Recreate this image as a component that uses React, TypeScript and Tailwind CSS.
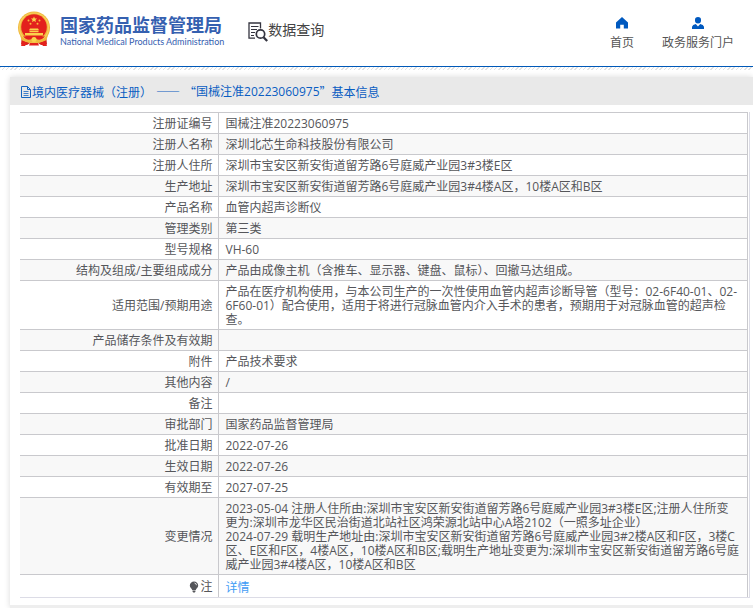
import React from "react"
import { clsx } from "clsx"

// ── Record data ───────────────────────────────────────────────────────────────

interface RecordRow {
  label: string
  value: string[]
}

const ROWS: RecordRow[] = [
  { label: "注册证编号", value: ["国械注准20223060975"] },
  { label: "注册人名称", value: ["深圳北芯生命科技股份有限公司"] },
  { label: "注册人住所", value: ["深圳市宝安区新安街道留芳路6号庭威产业园3#3楼E区"] },
  { label: "生产地址", value: ["深圳市宝安区新安街道留芳路6号庭威产业园3#4楼A区，10楼A区和B区"] },
  { label: "产品名称", value: ["血管内超声诊断仪"] },
  { label: "管理类别", value: ["第三类"] },
  { label: "型号规格", value: ["VH-60"] },
  {
    label: "结构及组成/主要组成成分",
    value: ["产品由成像主机（含推车、显示器、键盘、鼠标）、回撤马达组成。"],
  },
  {
    label: "适用范围/预期用途",
    value: [
      "产品在医疗机构使用，与本公司生产的一次性使用血管内超声诊断导管（型号：02-6F40-01、02-6F60-01）配合使用，适用于将进行冠脉血管内介入手术的患者，预期用于对冠脉血管的超声检查。",
    ],
  },
  { label: "产品储存条件及有效期", value: [] },
  { label: "附件", value: ["产品技术要求"] },
  { label: "其他内容", value: ["/"] },
  { label: "备注", value: [] },
  { label: "审批部门", value: ["国家药品监督管理局"] },
  { label: "批准日期", value: ["2022-07-26"] },
  { label: "生效日期", value: ["2022-07-26"] },
  { label: "有效期至", value: ["2027-07-25"] },
  {
    label: "变更情况",
    value: [
      "2023-05-04 注册人住所由:深圳市宝安区新安街道留芳路6号庭威产业园3#3楼E区;注册人住所变更为:深圳市龙华区民治街道北站社区鸿荣源北站中心A塔2102（一照多址企业）",
      "2024-07-29 载明生产地址由:深圳市宝安区新安街道留芳路6号庭威产业园3#2楼A区和F区，3楼C区、E区和F区，4楼A区，10楼A区和B区;载明生产地址变更为:深圳市宝安区新安街道留芳路6号庭威产业园3#4楼A区，10楼A区和B区",
    ],
  },
]

// ── Icons ─────────────────────────────────────────────────────────────────────

function Emblem() {
  return (
    <svg viewBox="0 0 34 36" className="h-9 w-[34px] shrink-0" aria-hidden="true">
      <path d="M5 24L4 33.500L10 34L13 32L17 34L21 32L24 34L30 33.500L29 24Z" fill="#d9201a" />
      <circle cx="17" cy="16.500" r="16" fill="#f0b83c" />
      <circle cx="17" cy="16.500" r="14.500" fill="none" stroke="#f7cf5d" strokeWidth="1.200" />
      <circle cx="17" cy="16" r="12.800" fill="#e3211d" />
      <path d="M17 5.500l.9 2h2.200l-1.700 1.400.6 2.200-2-1.200-2 1.200.6-2.200-1.700-1.400h2.200z" fill="#fbd34c" />
      <circle cx="11.500" cy="9.500" r="1" fill="#f6b93b" />
      <circle cx="22.500" cy="9.500" r="1" fill="#f6b93b" />
      <circle cx="13.500" cy="12.700" r="1" fill="#f6b93b" />
      <circle cx="20.500" cy="12.700" r="1" fill="#f6b93b" />
      <path d="M13 17.500h8l1 1.800H12zM12.500 19.800h9v1.500h-9zM8 22h18v2.500H8z" fill="#fbd34c" />
      <path d="M6 25.500h22l-4 3.500H10z" fill="#e3211d" />
      <path d="M3 24q6 7 14 3.500Q25 31 31 24l-1.500 5q-5 4-12.500 2Q9.500 33 4.500 29z" fill="#f0b83c" />
      <circle cx="17" cy="28.500" r="2.500" fill="#fbd34c" />
      <path d="M6 30l4.500 1.500L8 35H4zM28 30l-4.500 1.500L26 35h4zM13 32h8l1 2.500H12z" fill="#e3211d" />
    </svg>
  )
}

function QueryIcon() {
  return (
    <svg viewBox="0 0 20 20" className="h-5 w-5 shrink-0" fill="none" stroke="#34343f" aria-hidden="true">
      <path d="M7 16.200H1V1h11.500v5.500" strokeWidth="1.300" />
      <path d="M3 4.500h7.500M3 7.500h6M3 10.500h4M3 13.500h3" strokeWidth="1.100" />
      <circle cx="12.500" cy="12" r="4.200" strokeWidth="1.700" />
      <path d="M15.500 15.200l3.700 3.800" strokeWidth="2.300" />
    </svg>
  )
}

function HomeIcon() {
  return (
    <svg viewBox="0 0 12 12" className="h-3 w-3" fill="#0059bf" aria-hidden="true">
      <path d="M6 0L12 5.500V11.500H7.800V7.800H4.200V11.500H0V5.500Z" />
    </svg>
  )
}

function UserIcon() {
  return (
    <svg viewBox="0 0 12 12" className="h-3 w-3" fill="#0059bf" aria-hidden="true">
      <path d="M3 2.800a3 2.800 0 0 1 6 0v.7a3 2.900 0 0 1-6 0z" />
      <path d="M0 12V9.800Q.5 7.500 3.800 7L6 9.500 8.200 7Q11.500 7.500 12 9.800V12Z" />
    </svg>
  )
}

function FileIcon() {
  return (
    <svg viewBox="0 0 12 12" className="h-3 w-3 shrink-0" fill="none" stroke="#1565c0" aria-hidden="true">
      <path d="M1.500 .5h6l3 3v8h-9zM7.500 .5v3h3" />
      <path d="M3.500 5.500h5M3.500 7.500h5M3.500 9.500h5" strokeWidth=".8" />
    </svg>
  )
}

function BulbIcon() {
  return (
    <svg viewBox="0 0 10 12" className="h-3 w-[10px]" fill="#55565a" aria-hidden="true">
      <path d="M5 .5a4.200 4.200 0 0 1 4.200 4.200C9.200 6.800 7 7.500 6.800 9H3.200C3 7.500.8 6.800.8 4.700A4.200 4.200 0 0 1 5 .5zM3.500 9.500h3v1L5.800 11.500H4.200L3.500 10.500z" />
      <path d="M5.500 2q1.800.3 2 2.200" fill="none" stroke="#fff" strokeWidth=".8" />
    </svg>
  )
}

// ── Page ──────────────────────────────────────────────────────────────────────

function Header() {
  return (
    <header>
      <div className="flex h-[66px] items-start justify-between pr-[19px] pl-[17px]">
        <div className="flex items-start pt-[11px]">
          <a href="#" className="flex gap-[9px]">
            <Emblem />
            <span className="flex flex-col pt-[3px] text-[#3560b0]">
              <span className="font-['Noto_Sans_CJK_SC'] text-[18px] leading-5 font-bold whitespace-nowrap">
                国家药品监督管理局
              </span>
              <span className="pt-px font-[Lato] text-[9px] leading-[14px] whitespace-nowrap">
                National Medical Products Administration
              </span>
            </span>
          </a>
          <a href="#" className="ml-6 flex items-start pt-[11px] text-[#444]">
            <QueryIcon />
            <span className="text-sm leading-4 whitespace-nowrap">数据查询</span>
          </a>
        </div>
        <nav className="flex gap-7 pt-[17px] text-[#555]">
          <a href="#" className="flex flex-col items-center gap-[7px]">
            <HomeIcon />
            <span>首页</span>
          </a>
          <a href="#" className="flex flex-col items-center gap-[7px]">
            <UserIcon />
            <span>政务服务门户</span>
          </a>
        </nav>
      </div>
      <div className="h-px bg-[#0059b8]" />
      <div className="h-[3px] bg-[repeating-linear-gradient(135deg,#e2e2e2_0_1px,#fff_1px_3px)]" />
    </header>
  )
}

function InfoTable() {
  return (
    <table className="w-full border-collapse border-r border-[#c9c9cd]">
      <tbody>
        {ROWS.map((row, i) => (
          <tr key={row.label} className={clsx("border-t border-[#c9c9cd]", i % 2 === 1 && "bg-[#f8f8f8]")}>
            <th scope="row" className="w-[198px] border-r border-[#c9c9cd] pt-1 pr-[5px] pb-[2px] text-right font-normal">
              {row.label}
            </th>
            <td className="h-[21px] px-[7px] pt-1 pb-[2px] break-all">
              {row.value.map((line) => (
                <p key={line}>{line}</p>
              ))}
            </td>
          </tr>
        ))}
        <tr className="border-t border-[#c9c9cd]">
          <th scope="row" className="border-r border-[#c9c9cd] pt-1 pr-[5px] pb-[2px] font-normal">
            <span className="flex items-center justify-end gap-px">
              <BulbIcon />注
            </span>
          </th>
          <td className="h-[22px] px-[7px] pt-[5px]">
            <a href="#" className="text-[#3f9cf5]">详情</a>
          </td>
        </tr>
      </tbody>
    </table>
  )
}

export default function App() {
  return (
    <div
      lang="zh-CN"
      className="min-h-screen bg-white font-['Open_Sans','Noto_Sans_CJK_SC',sans-serif] text-xs leading-[14px] text-[#55565a]"
    >
      <Header />
      <main className="mt-[7px] ml-[10px] border-b-[3px] border-[#eee] pb-[7px] shadow-[0_0_6px_rgba(0,0,0,0.15)]">
        <h1 className="flex h-7 items-center bg-[#e9e9e9] pt-px pl-[10px] text-[#0a5dc2]">
          <FileIcon />
          <span className="font-['Noto_Sans_CJK_SC']">境内医疗器械（注册）</span>
          <span className="px-1 font-['Noto_Sans_CJK_SC'] [font-feature-settings:'fwid']">——</span>
          <span className="font-['Noto_Sans_CJK_SC'] [font-feature-settings:'fwid']">“</span>
          <span>国械注准20223060975</span>
          <span className="font-['Noto_Sans_CJK_SC'] [font-feature-settings:'fwid']">”基本信息</span>
        </h1>
        <div className="mt-[7px] mr-[3px] ml-[10px] border-r border-b border-[#dcdce6] pr-px">
          <InfoTable />
        </div>
      </main>
    </div>
  )
}
